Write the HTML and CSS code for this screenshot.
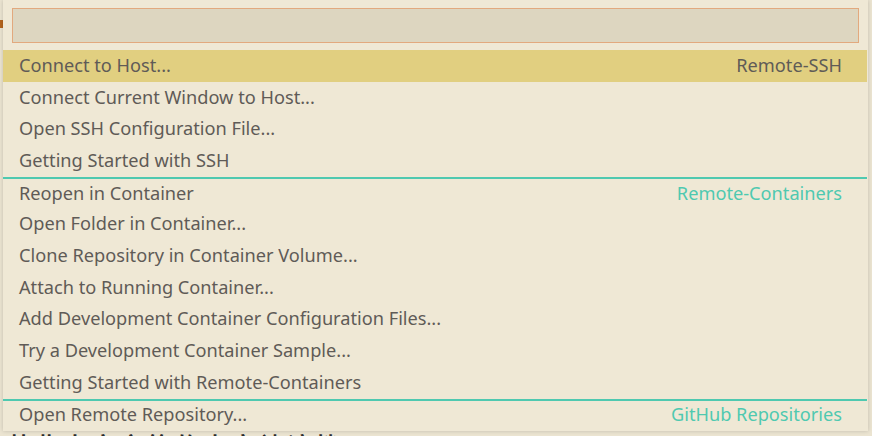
FILE: index.html
```html
<!DOCTYPE html>
<html>
<head>
<meta charset="utf-8">
<link rel="stylesheet" href="styles.css">
</head>
<body>
<div class="editor">
  <div class="edge-icon"></div>
  <div class="behind-text">某些中文字符的内容被遮挡</div>
</div>
<div class="quickpick">
  <div class="input"></div>
  <div class="list">
    <div class="row selected"><span class="label">Connect to Host...</span><span class="desc">Remote-SSH</span></div>
    <div class="row"><span class="label">Connect Current Window to Host...</span></div>
    <div class="row"><span class="label">Open SSH Configuration File...</span></div>
    <div class="row"><span class="label">Getting Started with SSH</span></div>
    <div class="row sep"><span class="label">Reopen in Container</span><span class="desc accent">Remote-Containers</span></div>
    <div class="row"><span class="label">Open Folder in Container...</span></div>
    <div class="row"><span class="label">Clone Repository in Container Volume...</span></div>
    <div class="row"><span class="label">Attach to Running Container...</span></div>
    <div class="row"><span class="label">Add Development Container Configuration Files...</span></div>
    <div class="row"><span class="label">Try a Development Container Sample...</span></div>
    <div class="row"><span class="label">Getting Started with Remote-Containers</span></div>
    <div class="row sep"><span class="label">Open Remote Repository...</span><span class="desc accent">GitHub Repositories</span></div>
  </div>
</div>
</body>
</html>
```
FILE: styles.css
```css
html, body {
  margin: 0;
  padding: 0;
  width: 872px;
  height: 436px;
  overflow: hidden;
  background: #ebe4d1;
  font-family: "Noto Sans", "Open Sans", sans-serif;
}
.editor {
  position: relative;
  width: 872px;
  height: 436px;
  overflow: hidden;
}
.edge-icon {
  position: absolute;
  left: 0;
  top: 20px;
  width: 3px;
  height: 8px;
  background: #b5651d;
}
.behind-text {
  position: absolute;
  left: 8px;
  top: 428px;
  font-family: "Noto Sans CJK SC", sans-serif;
  font-weight: 700;
  font-size: 22px;
  line-height: 30px;
  color: #2b2b2b;
  letter-spacing: 6px;
}
.quickpick {
  position: absolute;
  left: 3px;
  top: 0;
  width: 865px;
  height: 431px;
  overflow: hidden;
  background: #efe8d5;
  box-shadow: 0 0 4px rgba(0, 0, 0, 0.18);
  display: flex;
  flex-direction: column;
}
.input {
  flex-shrink: 0;
  margin: 8px 9px 7px 9px;
  height: 33px;
  border: 1px solid #e2a97e;
  background: #ddd6c0;
}
.list {
  flex-shrink: 0;
  display: flex;
  flex-direction: column;
}
.row {
  flex-shrink: 0;
  height: 31.7px;
  box-sizing: border-box;
  display: flex;
  align-items: center;
  justify-content: space-between;
  padding: 0 26px 2px 16px;
  font-size: 18.2px;
  color: #5f5b57;
  white-space: nowrap;
}
.row.selected {
  background: #e1cf80;
  margin-right: 1px;
  padding-right: 25px;
}
.row.sep {
  border-top: 2px solid #4fc9b0;
  margin-right: 1px;
  padding-right: 25px;
}
.desc {
  color: #5f5b57;
}
.desc.accent {
  color: #4fc9b0;
}
```
